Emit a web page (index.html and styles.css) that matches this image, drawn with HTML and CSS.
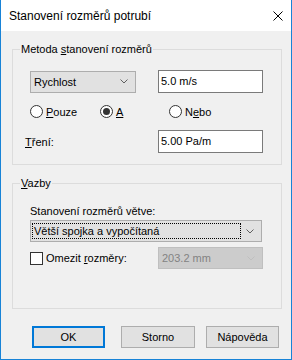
FILE: index.html
```html
<!DOCTYPE html>
<html lang="cs">
<head>
  <meta charset="UTF-8">
  <meta name="viewport" content="width=device-width, initial-scale=1.0">
  <title>Stanovení rozměrů potrubí</title>
  <link rel="stylesheet" href="styles.css">
</head>
<body>
  <div class="window">
    <div class="titlebar">
      <span class="title">Stanovení rozměrů potrubí</span>
      <svg class="close" width="10" height="10" viewBox="0 0 10 10">
        <path d="M0.5 0.5 L9.5 9.5 M9.5 0.5 L0.5 9.5" stroke="#000" stroke-width="1" fill="none"/>
      </svg>
    </div>

    <div class="content">
      <fieldset class="group group-method">
        <legend>Metoda <u>s</u>tanovení rozměrů</legend>

        <div class="row row-top">
          <div class="combo combo-method">
            <span>Rychlost</span>
            <svg class="arrow" width="8" height="5" viewBox="0 0 8 5"><path d="M0.5 0.5 L4 4 L7.5 0.5" stroke="#606060" fill="none"/></svg>
          </div>
          <div class="textbox">5.0 m/s</div>
        </div>

        <div class="row row-radios">
          <label class="radio radio-pouze"><span class="radio-circle"></span><span><u>P</u>ouze</span></label>
          <label class="radio radio-a"><span class="radio-circle checked"></span><span><u>A</u></span></label>
          <label class="radio"><span class="radio-circle"></span><span>N<u>e</u>bo</span></label>
        </div>

        <div class="row row-friction">
          <span class="label-friction"><u>T</u>ření:</span>
          <div class="textbox">5.00 Pa/m</div>
        </div>
      </fieldset>

      <fieldset class="group group-links">
        <legend><u>V</u>azby</legend>

        <div class="label-branch">Stanovení rozměrů větve:</div>
        <div class="combo combo-branch">
          <span class="focus">Větší spojka a vypočítaná</span>
          <svg class="arrow" width="8" height="5" viewBox="0 0 8 5"><path d="M0.5 0.5 L4 4 L7.5 0.5" stroke="#606060" fill="none"/></svg>
        </div>

        <div class="row row-limit">
          <label class="check"><span class="check-box"></span><span>Omezit <u>r</u>ozměry:</span></label>
          <div class="combo combo-disabled">
            <span>203.2 mm</span>
            <svg class="arrow" width="8" height="5" viewBox="0 0 8 5"><path d="M0.5 0.5 L4 4 L7.5 0.5" stroke="#bfbfbf" fill="none"/></svg>
          </div>
        </div>
      </fieldset>

      <div class="buttons">
        <button class="btn btn-ok">OK</button>
        <button class="btn btn-cancel">Storno</button>
        <button class="btn btn-help">Nápověda</button>
      </div>
    </div>
  </div>
</body>
</html>
```

FILE: styles.css
```css
body {
  margin: 0;
  padding: 0;
  font-family: "Liberation Sans", Arial, sans-serif;
  font-size: 11px;
  color: #000;
  background-color: #fff;
}

.window {
  width: 290px;
  height: 359px;
  border: 1px solid #1883d7;
  border-top: none;
  background-color: #f0f0f0;
  display: flex;
  flex-direction: column;
}

.titlebar {
  height: 31px;
  background-color: #fff;
  display: flex;
  align-items: center;
  justify-content: space-between;
  padding: 0 8px 0 8px;
}

.title {
  font-size: 12px;
}

.close {
  display: block;
}

.content {
  padding: 12px 0 0 11px;
}

.group {
  width: 233px;
  margin: 0;
  padding: 0 18px 0 17px;
  border: 1px solid #dcdcdc;
}

.group legend {
  padding: 0 1px;
  margin-left: -10px;
  line-height: 13px;
}

.group-method {
  padding-top: 14px;
  padding-bottom: 11px;
}

.group-links {
  margin-top: 12px;
  padding-top: 15px;
  padding-bottom: 39px;
}

u {
  text-decoration: underline;
  text-underline-offset: 1px;
}

.row {
  display: flex;
  align-items: center;
}

.row-top,
.row-friction {
  justify-content: space-between;
}

.row-radios {
  margin-top: 12px;
  height: 13px;
}

.row-friction {
  margin-top: 12px;
}

.label-friction {
  margin-left: -5px;
}

.textbox {
  width: 101px;
  height: 21px;
  line-height: 21px;
  padding-left: 2px;
  background-color: #fff;
  border: 1px solid #7a7a7a;
}

.combo {
  box-sizing: border-box;
  height: 22px;
  display: flex;
  align-items: center;
  justify-content: space-between;
  padding: 0 7px 0 3px;
  background-color: #e1e1e1;
  border: 1px solid #adadad;
}

.combo .arrow {
  display: block;
}

.combo-method {
  width: 106px;
}

.combo-branch {
  width: 232px;
  margin-top: 2px;
  padding-left: 2px;
}

.combo-branch .focus {
  width: 207px;
  height: 14px;
  line-height: 14px;
  padding-left: 1px;
  outline: 1px dotted #000;
  box-sizing: border-box;
}

.combo-disabled {
  width: 105px;
  background-color: #cccccc;
  border-color: #bfbfbf;
  color: #838383;
}

.row-limit {
  margin-top: 5px;
  justify-content: space-between;
}

.radio,
.check {
  display: flex;
  align-items: center;
  height: 13px;
}

.radio-pouze {
  width: 70px;
}

.radio-a {
  width: 69px;
}

.radio-circle {
  box-sizing: border-box;
  width: 13px;
  height: 13px;
  margin-right: 3px;
  border: 1px solid #333;
  border-radius: 50%;
  background-color: #fff;
  display: flex;
  align-items: center;
  justify-content: center;
}

.radio-circle.checked::after {
  content: "";
  width: 7px;
  height: 7px;
  border-radius: 50%;
  background-color: #333;
}

.check-box {
  box-sizing: border-box;
  width: 13px;
  height: 13px;
  margin-right: 3px;
  border: 1px solid #333;
  background-color: #fff;
}

.label-branch {
  line-height: 13px;
}

.buttons {
  display: flex;
  margin-top: 17px;
  padding-left: 20px;
}

.btn {
  height: 22px;
  margin: 0;
  padding: 0;
  font-family: inherit;
  font-size: 11px;
  color: #000;
  background-color: #e1e1e1;
  border: 1px solid #adadad;
}

.btn-ok {
  width: 73px;
  border: 2px solid #0078d7;
}

.btn-cancel {
  width: 74px;
  margin-left: 16px;
}

.btn-help {
  width: 73px;
  margin-left: 11px;
}
```
